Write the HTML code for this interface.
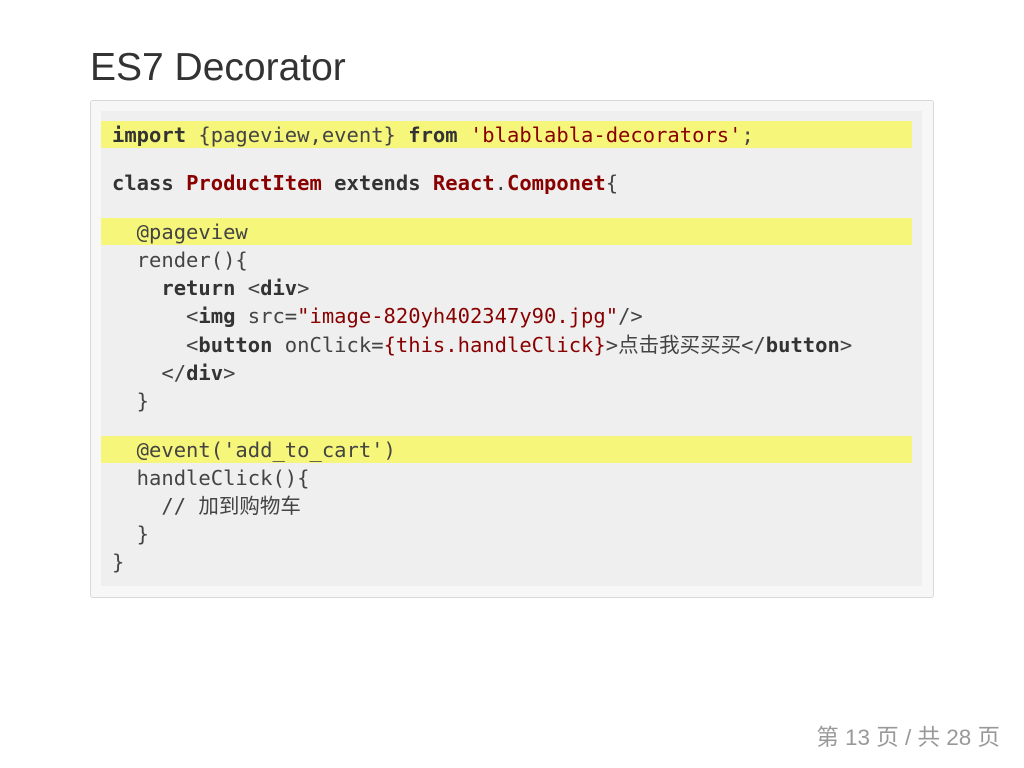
<!DOCTYPE html>
<html><head><meta charset="utf-8"><style>
body{margin:0;width:1024px;height:768px;background:#fff;position:relative;overflow:hidden}
h1{position:absolute;left:90px;top:42px;margin:0;font:39px/52px "Liberation Sans",sans-serif;color:#333}
.box{position:absolute;left:90px;top:100px;width:842px;height:496px;border:1px solid #d8d8d8;border-radius:3px;background:#f7f7f7}
.pre{position:absolute;left:101px;top:111px;width:821px;height:475px;background:#efefef}
.hl{position:absolute;left:101px;width:811px;height:27px;background:#f6f67a}
.l{position:absolute;left:112px;font:20.5px/28px "DejaVu Sans Mono","WenQuanYi Zen Hei",monospace;color:#444;white-space:pre}
b{color:#333}
.r{color:#880000}
.r b,b.r{color:#880000}
.ft{position:absolute;right:24px;top:723px;font:22.5px/30px "Liberation Sans","Noto Sans CJK SC",sans-serif;color:#999}
</style></head><body>
<h1>ES7 Decorator</h1>
<div class="box"></div>
<div class="pre"></div>
<div class="hl" style="top:121px"></div>
<div class="hl" style="top:218px"></div>
<div class="hl" style="top:436px"></div>
<div class="l" style="top:121px"><b>import</b> {pageview,event} <b>from</b> <span class="r">'blablabla-decorators'</span>;</div>
<div class="l" style="top:169px"><b>class</b> <b class="r">ProductItem</b> <b>extends</b> <b class="r">React</b>.<b class="r">Componet</b>{</div>
<div class="l" style="top:218px">  @pageview</div>
<div class="l" style="top:246px">  render(){</div>
<div class="l" style="top:274px">    <b>return</b> &lt;<b>div</b>&gt;</div>
<div class="l" style="top:302px">      &lt;<b>img</b> src=<span class="r">"image-820yh402347y90.jpg"</span>/&gt;</div>
<div class="l" style="top:331px">      &lt;<b>button</b> onClick=<span class="r">{this.handleClick}</span>&gt;点击我买买买&lt;/<b>button</b>&gt;</div>
<div class="l" style="top:359px">    &lt;/<b>div</b>&gt;</div>
<div class="l" style="top:387px">  }</div>
<div class="l" style="top:436px">  @event('add_to_cart')</div>
<div class="l" style="top:464px">  handleClick(){</div>
<div class="l" style="top:492px">    // 加到购物车</div>
<div class="l" style="top:520px">  }</div>
<div class="l" style="top:548px">}</div>
<div class="ft">第 13 页 / 共 28 页</div>
</body></html>
